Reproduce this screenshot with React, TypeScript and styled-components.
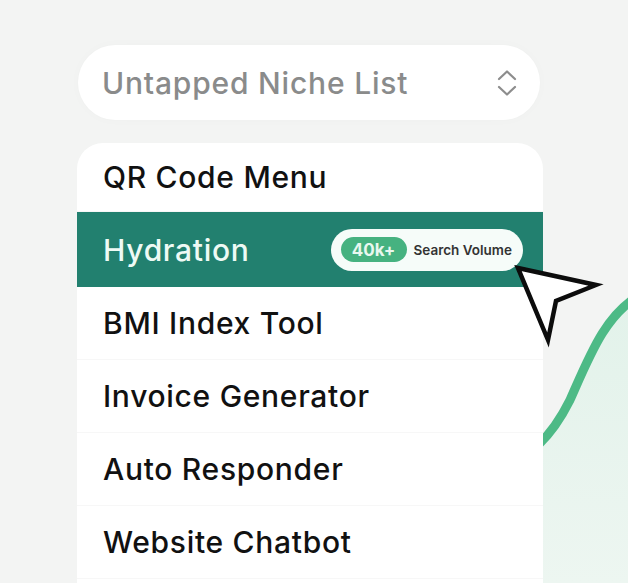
import React from 'react';
import styled, { createGlobalStyle } from 'styled-components';

const GlobalStyle = createGlobalStyle`
  html, body {
    margin: 0;
    padding: 0;
    background: #f3f4f3;
    font-family: 'Inter', 'Liberation Sans', sans-serif;
    overflow: hidden;
  }
`;

type NicheItem = {
  label: string;
  height: number;
  active?: boolean;
};

const items: Array<NicheItem> = [
  { label: 'QR Code Menu', height: 69 },
  { label: 'Hydration', height: 75, active: true },
  { label: 'BMI Index Tool', height: 73 },
  { label: 'Invoice Generator', height: 73 },
  { label: 'Auto Responder', height: 73 },
  { label: 'Website Chatbot', height: 73 },
  { label: '', height: 73 },
];

const UpDownIcon = () => (
  <svg width="22" height="30" viewBox="0 0 22 30" fill="none">
    <path d="M3 11 L11 3.5 L19 11" stroke="#8d8d8d" strokeWidth="2.2" strokeLinecap="round" strokeLinejoin="round" />
    <path d="M3 19 L11 26.5 L19 19" stroke="#8d8d8d" strokeWidth="2.2" strokeLinecap="round" strokeLinejoin="round" />
  </svg>
);

export default function App() {
  return (
    <>
      <GlobalStyle />
      <Page>
        <Chart width="628" height="583" viewBox="0 0 628 583">
          <defs>
            <linearGradient id="mint" x1="0" y1="0" x2="0" y2="1">
              <stop offset="0" stopColor="#e2f2ea" />
              <stop offset="1" stopColor="#edf6f1" />
            </linearGradient>
          </defs>
          <path
            d="M500 470 C530 455, 550 440, 570 400 C590 355, 605 315, 640 295 L640 583 L500 583 Z"
            fill="url(#mint)"
          />
          <path
            d="M500 470 C530 455, 550 440, 570 400 C590 355, 605 315, 640 295"
            stroke="#4dba86"
            strokeWidth="9"
            fill="none"
          />
        </Chart>

        <Select>
          <SelectLabel>Untapped Niche List</SelectLabel>
          <UpDownIcon />
        </Select>

        <ListCard>
          {items.map((item, i) => (
            <Row key={i} $height={item.height} $active={item.active}>
              <RowLabel $active={item.active}>{item.label}</RowLabel>
              {item.active && (
                <Badge>
                  <Count>40k+</Count>
                  <BadgeText>Search Volume</BadgeText>
                </Badge>
              )}
            </Row>
          ))}
        </ListCard>

        <Cursor width="90" height="84" viewBox="0 0 90 84">
          <path
            d="M4 4 L82 21 L42 37 L34 76 Z"
            fill="#ffffff"
            stroke="#0c0c0c"
            strokeWidth="4.5"
            strokeLinejoin="miter"
          />
        </Cursor>
      </Page>
    </>
  );
}

const Page = styled.div`
  position: relative;
  width: 628px;
  height: 583px;
  overflow: hidden;
  display: flex;
  flex-direction: column;
  padding: 45px 0 0 77px;
  box-sizing: border-box;
  gap: 23px;
`;

const Chart = styled.svg`
  position: absolute;
  left: 0;
  top: 0;
  z-index: 0;
`;

const Select = styled.div`
  position: relative;
  z-index: 1;
  flex-shrink: 0;
  margin-left: 1px;
  width: 462px;
  height: 75px;
  box-sizing: border-box;
  border-radius: 38px;
  background: #ffffff;
  display: flex;
  align-items: center;
  justify-content: space-between;
  padding: 0 22px 0 24px;
  box-shadow: 0 0 12px rgba(0, 0, 0, 0.02);
`;

const SelectLabel = styled.span`
  font-size: 30px;
  font-weight: 500;
  color: #8a8b8b;
  letter-spacing: 0.8px;
`;

const ListCard = styled.div`
  position: relative;
  z-index: 1;
  flex-shrink: 0;
  width: 466px;
  background: #ffffff;
  border-radius: 26px 26px 0 0;
  display: flex;
  flex-direction: column;
`;

const Row = styled.div<{ $height: number; $active?: boolean }>`
  flex-shrink: 0;
  height: ${(p) => p.$height}px;
  display: flex;
  align-items: center;
  justify-content: space-between;
  padding: 0 20px 0 26px;
  background: ${(p) => (p.$active ? '#22806f' : 'transparent')};
  border-bottom: ${(p) => (p.$active ? 'none' : '1px solid #f7f7f7')};
  box-sizing: border-box;
`;

const RowLabel = styled.span<{ $active?: boolean }>`
  font-size: 30px;
  font-weight: 500;
  color: ${(p) => (p.$active ? '#eefaf5' : '#111111')};
  letter-spacing: 0.7px;
`;

const Badge = styled.div`
  display: flex;
  align-items: center;
  gap: 7px;
  height: 42px;
  box-sizing: border-box;
  padding: 0 11px 0 10px;
  border-radius: 21px;
  background: #f6fcf9;
`;

const Count = styled.span`
  display: inline-flex;
  align-items: center;
  justify-content: center;
  width: 66px;
  height: 25px;
  border-radius: 13px;
  background: #46b280;
  color: #e8f8ef;
  font-size: 17px;
  font-weight: 700;
`;

const BadgeText = styled.span`
  font-size: 13.5px;
  font-weight: 600;
  color: #333333;
  letter-spacing: 0;
`;

const Cursor = styled.svg`
  position: absolute;
  left: 514px;
  top: 264px;
  z-index: 2;
`;
